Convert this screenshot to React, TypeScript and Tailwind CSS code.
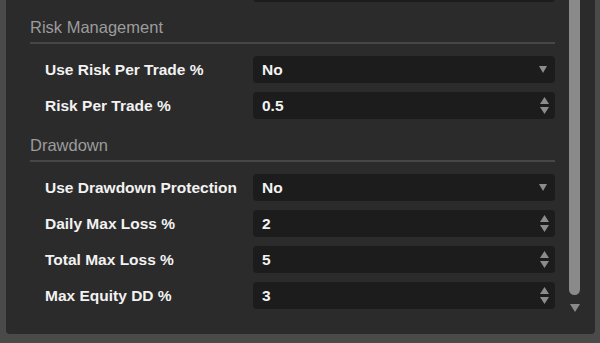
import React from "react";

function DropTri() {
  return (
    <svg width="8" height="7" viewBox="0 0 8 7" className="block">
      <path d="M0 0 H8 L4 7 Z" fill="#8c8c8c" />
    </svg>
  );
}

function Spinner() {
  return (
    <div className="flex flex-col gap-[3px]">
      <svg width="9" height="7" viewBox="0 0 9 7" className="block">
        <path d="M4.5 0 L9 7 H0 Z" fill="#8c8c8c" />
      </svg>
      <svg width="9" height="7" viewBox="0 0 9 7" className="block">
        <path d="M0 0 H9 L4.5 7 Z" fill="#8c8c8c" />
      </svg>
    </div>
  );
}

type RowProps = { label: string; value: string; kind: "select" | "number" };

function Row({ label, value, kind }: RowProps) {
  return (
    <div className="flex h-[27px] items-center pl-[15px]">
      <div className="w-[208px] text-[15.5px] font-bold leading-none text-[#f2f2f2]">{label}</div>
      <div className="flex h-full flex-1 items-center justify-between rounded-[4px] bg-[#1c1c1c] pl-[9px] text-[15.5px] font-bold text-[#f2f2f2]">
        <span>{value}</span>
        {kind === "select" ? (
          <div className="pr-[8px]">
            <DropTri />
          </div>
        ) : (
          <div className="pr-[6px]">
            <Spinner />
          </div>
        )}
      </div>
    </div>
  );
}

function Section({ title, children }: { title: string; children: React.ReactNode }) {
  return (
    <div className="flex flex-col">
      <div className="border-b-2 border-[#474747] pb-[5px] text-[16.5px] leading-[20px] text-[#9c9c9c]">
        {title}
      </div>
      <div className="mt-[12px] flex flex-col gap-[9px]">{children}</div>
    </div>
  );
}

export default function App() {
  return (
    <div
      className="h-[343px] w-[600px] overflow-hidden bg-[#4a4a4a] pb-[9px] pl-[6px] pr-[5px]"
      style={{ fontFamily: '"Liberation Sans", Arial, sans-serif' }}
    >
      <div className="flex h-full rounded-b-[4px] bg-[#2b2b2b]">
        <div className="flex-1 overflow-hidden pl-[24px]">
          <div className="-mt-[25px] flex flex-col">
            <div className="flex h-[27px] pl-[15px]">
              <div className="w-[208px]" />
              <div className="flex-1 rounded-[4px] bg-[#1c1c1c]" />
            </div>
            <div className="mt-[15px] flex flex-col gap-[16px]">
              <Section title="Risk Management">
                <Row label="Use Risk Per Trade %" value="No" kind="select" />
                <Row label="Risk Per Trade %" value="0.5" kind="number" />
              </Section>
              <Section title="Drawdown">
                <Row label="Use Drawdown Protection" value="No" kind="select" />
                <Row label="Daily Max Loss %" value="2" kind="number" />
                <Row label="Total Max Loss %" value="5" kind="number" />
                <Row label="Max Equity DD %" value="3" kind="number" />
              </Section>
            </div>
          </div>
        </div>
        <div className="flex w-[40px] flex-col items-start pl-[14px]">
          <div className="h-[295px] w-[11px] rounded-b-[6px] bg-[#8a8a8a]" />
          <div className="mt-[9px] flex w-[11px] justify-center">
            <svg width="10" height="8" viewBox="0 0 10 8" className="block">
              <path d="M0 0 H10 L5 8 Z" fill="#8a8a8a" />
            </svg>
          </div>
        </div>
      </div>
    </div>
  );
}
